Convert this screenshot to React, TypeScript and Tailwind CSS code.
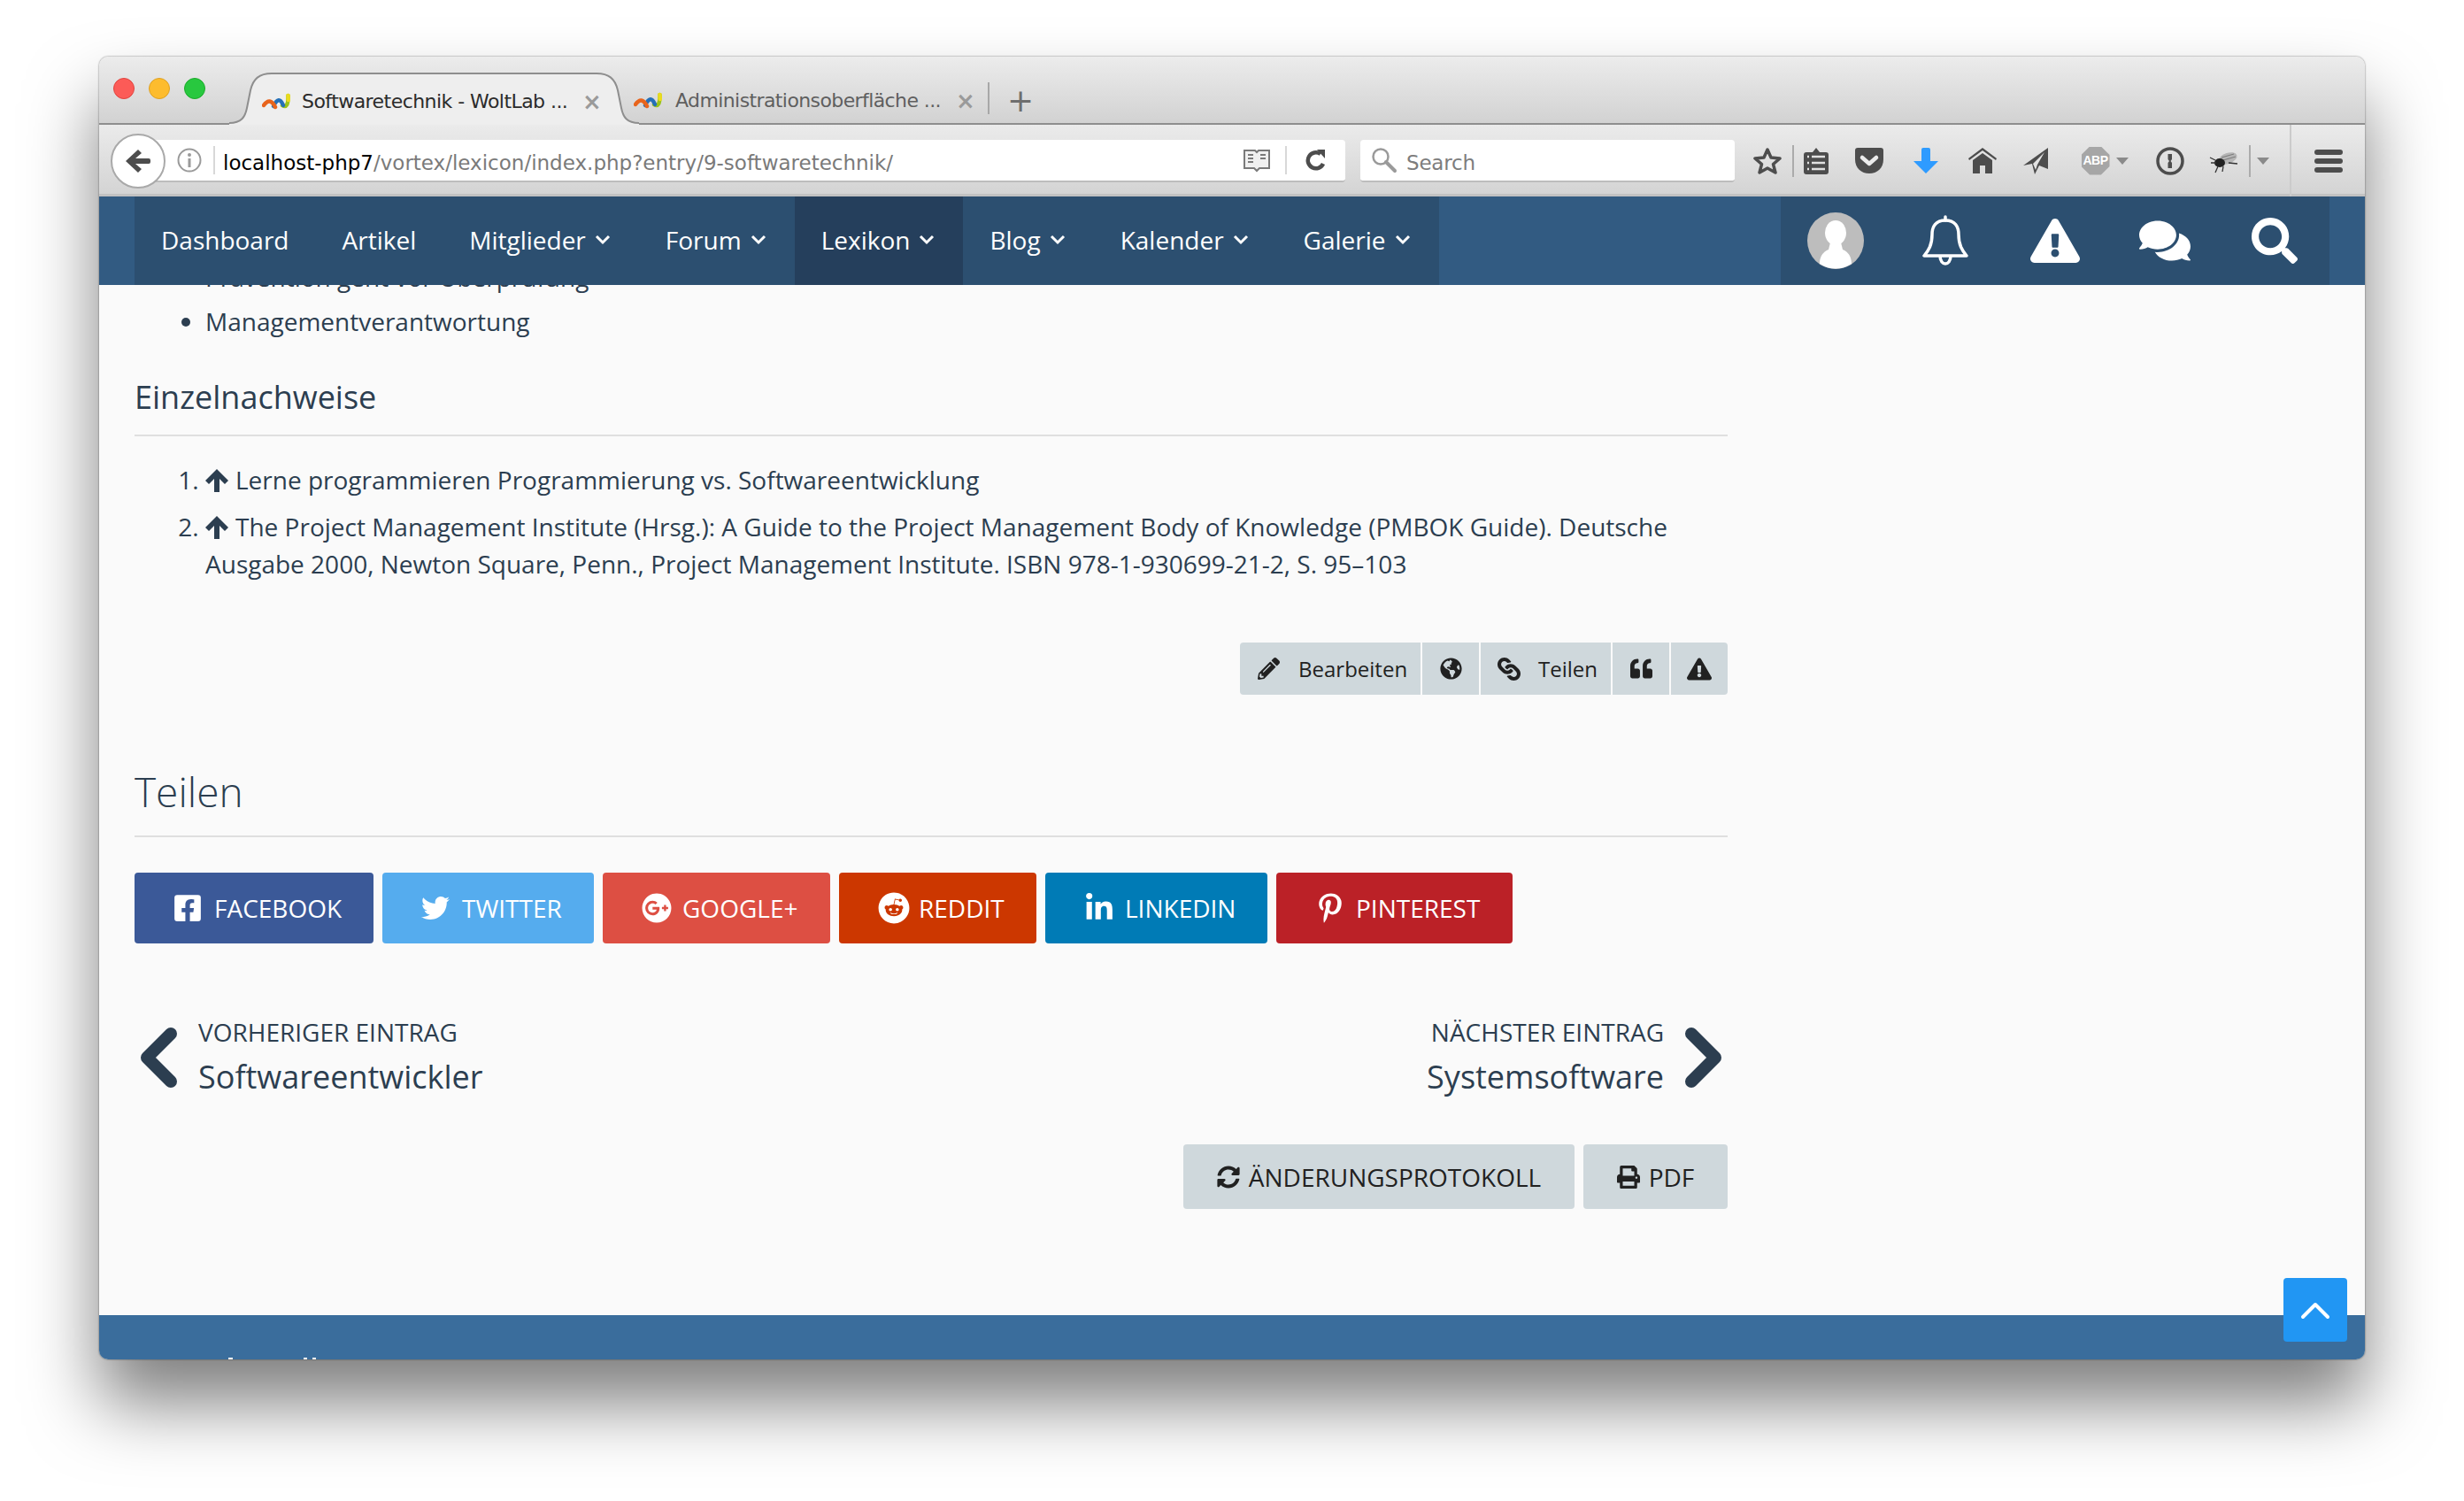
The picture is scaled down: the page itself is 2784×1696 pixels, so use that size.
import React from 'react';
import {
  FaComments,
  FaExclamationTriangle,
  FaFacebookSquare,
  FaGlobeAmericas,
  FaGooglePlus,
  FaLink,
  FaLinkedinIn,
  FaPencilAlt,
  FaPinterestP,
  FaPrint,
  FaQuoteLeft,
  FaReddit,
  FaSearch,
  FaSyncAlt,
  FaTwitter,
} from 'react-icons/fa';

const navItems = [
  { label: 'Dashboard' },
  { label: 'Artikel' },
  { label: 'Mitglieder', menu: true },
  { label: 'Forum', menu: true },
  { label: 'Lexikon', menu: true, active: true },
  { label: 'Blog', menu: true },
  { label: 'Kalender', menu: true },
  { label: 'Galerie', menu: true },
];

const socialButtons = [
  { label: 'FACEBOOK', icon: <FaFacebookSquare className="h-[34px] w-[32px]" />, bg: 'bg-[#3b5998]', w: 'w-[270px]' },
  { label: 'TWITTER', icon: <FaTwitter className="h-[32px] w-[32px]" />, bg: 'bg-[#55acee]', w: 'w-[239px]' },
  { label: 'GOOGLE+', icon: <FaGooglePlus className="h-[34px] w-[34px]" />, bg: 'bg-[#dd4f43]', w: 'w-[257px]' },
  { label: 'REDDIT', icon: <FaReddit className="h-[36px] w-[36px]" />, bg: 'bg-[#cc3700]', w: 'w-[223px]' },
  { label: 'LINKEDIN', icon: <FaLinkedinIn className="h-[34px] w-[34px]" />, bg: 'bg-[#007bb6]', w: 'w-[251px]' },
  { label: 'PINTEREST', icon: <FaPinterestP className="h-[34px] w-[34px]" />, bg: 'bg-[#bb2127]', w: 'w-[267px]' },
];

function Favicon() {
  return (
    <svg width="32" height="20" viewBox="0 0 32 20" fill="none" strokeWidth="4.5" strokeLinecap="round" className="shrink-0">
      <path d="M23 14 Q30 18 29.500 3" stroke="#9ac31c" />
      <path d="M29.800 8 L29.500 3" stroke="#eadb1e" />
      <path d="M13 15 Q19 2 24 14" stroke="#2470b8" />
      <path d="M2 14 Q9 4 15 16" stroke="#e8641c" />
    </svg>
  );
}

function TabClose() {
  return <span className="w-[20px] text-center text-[26px] leading-none font-bold text-[#9a9a9a]">×</span>;
}

function TabStrip() {
  return (
    <div className="flex h-[77px] items-end border-b-2 border-[#8e8e8e] bg-gradient-to-b from-[#ececec] to-[#d2d2d2] font-['DejaVu_Sans',sans-serif]">
      <div className="mb-[27px] ml-[16px] flex gap-[16px] self-end">
        <span className="h-[24px] w-[24px] rounded-full border border-[#e0443e] bg-[#fc5b57]" />
        <span className="h-[24px] w-[24px] rounded-full border border-[#dea123] bg-[#fdbc2e]" />
        <span className="h-[24px] w-[24px] rounded-full border border-[#1aab29] bg-[#28c83f]" />
      </div>

      {/* active tab */}
      <div className="relative z-10 -mb-[2px] ml-[27px] flex h-[59px] w-[463px] items-center pt-[6px] pl-[37px]">
        <svg className="absolute inset-0" width="463" height="59" viewBox="0 0 463 59" fill="none">
          <path d="M0 57 C14 57 18 50 20 40 L24 20 C27 7 34 1 48 1 L415 1 C429 1 436 7 439 20 L443 40 C445 50 449 57 463 57 L463 59 L0 59 Z" fill="#eeeeee" />
          <path d="M0 57 C14 57 18 50 20 40 L24 20 C27 7 34 1 48 1 L415 1 C429 1 436 7 439 20 L443 40 C445 50 449 57 463 57" stroke="#8e8e8e" strokeWidth="2" />
        </svg>
        <div className="relative flex items-center">
          <Favicon />
          <span className="ml-[13px] w-[317px] whitespace-nowrap text-[22px] leading-[30px] tracking-[-0.55px] text-[#2b2b2b]">Softwaretechnik - WoltLab ...</span>
          <TabClose />
        </div>
      </div>

      {/* background tab */}
      <div className="relative z-20 -ml-[6px] flex h-[57px] w-[400px] items-center pt-[6px]">
        <Favicon />
        <span className="ml-[15px] w-[317px] whitespace-nowrap text-[22px] leading-[30px] tracking-[-0.6px] text-[#5f5f5f]">Administrationsoberfläche ...</span>
        <TabClose />
      </div>
      <span className="mb-[10px] h-[36px] w-[2px] bg-[#a8a8a8]" />
      <span className="mb-[5px] ml-[20px] text-[36px] leading-[40px] text-[#6e6e6e]">+</span>
    </div>
  );
}

function ToolCell({ w, children }: { w: string; children: React.ReactNode }) {
  return <div className={`flex items-center justify-center ${w}`}>{children}</div>;
}

function Caret() {
  return <span className="h-0 w-0 border-x-[7px] border-t-[8px] border-x-transparent border-t-[#8a8a8a]" />;
}

function Toolbar() {
  return (
    <div className="relative flex h-[81px] items-center bg-gradient-to-b from-[#ebebeb] to-[#d3d3d3] font-['DejaVu_Sans',sans-serif] shadow-[inset_0_-3px_0_#c2c2c2]">
      <div className="relative z-10 ml-[13px] flex h-[62px] w-[62px] items-center justify-center rounded-full border-2 border-[#a9a9a9] bg-white">
        <svg width="30" height="30" viewBox="0 0 30 30" fill="#4d4d4d">
          <path d="M15 2 L19 6 L12 12 H27 a2 2 0 0 1 2 2 v2 a2 2 0 0 1 -2 2 H12 L19 24 L15 28 L1 15 Z" />
        </svg>
      </div>

      <div className="-ml-[14px] flex h-[48px] w-[1347px] items-center rounded-r-[4px] border-b-2 border-[#bdbdbd] bg-white">
        <svg className="ml-[27px] shrink-0" width="28" height="28" viewBox="0 0 28 28" fill="none">
          <circle cx="14" cy="14" r="12.5" stroke="#9a9a9a" strokeWidth="2" />
          <circle cx="14" cy="8" r="2" fill="#9a9a9a" />
          <rect x="12.5" y="12" width="3" height="10" fill="#9a9a9a" />
        </svg>
        <span className="ml-[13px] h-[32px] w-[2px] shrink-0 bg-[#d8d8d8]" />
        <span className="ml-[9px] whitespace-nowrap pt-[6px] text-[23px] leading-[30px] text-[#7a7a7a]">
          <span className="text-black">localhost-php7</span>/vortex/lexicon/index.php?entry/9-softwaretechnik/
        </span>
        <div className="ml-auto flex items-center">
          <svg width="32" height="28" viewBox="0 0 32 28" fill="none">
            <path d="M2 3 H14 L16 5 L18 3 H30 V23 H19 L16 26 L13 23 H2 Z" stroke="#7a7a7a" strokeWidth="2" fill="#f0f0f0" />
            <path d="M6 8 H12 M6 12 H12 M6 16 H12 M20 8 H26 M20 12 H26" stroke="#7a7a7a" strokeWidth="2" />
          </svg>
          <span className="ml-[16px] h-[32px] w-[2px] bg-[#d8d8d8]" />
          <svg className="mr-[21px] ml-[21px]" width="24" height="26" viewBox="0 0 24 26" fill="none">
            <path d="M20 17 A9 9 0 1 1 17 6" stroke="#4d4d4d" strokeWidth="4.5" />
            <path d="M13 1 L22 1 L22 11 Z" fill="#4d4d4d" />
          </svg>
        </div>
      </div>

      <div className="ml-[17px] flex h-[48px] w-[423px] items-center rounded-[4px] border-b-2 border-[#bdbdbd] bg-white">
        <svg className="ml-[12px]" width="30" height="30" viewBox="0 0 30 30" fill="none" stroke="#9a9a9a">
          <circle cx="11" cy="11" r="8.5" strokeWidth="2.5" />
          <path d="M17 17 L27 27" strokeWidth="4" strokeLinecap="round" />
        </svg>
        <span className="ml-[10px] pt-[6px] text-[23px] leading-[30px] tracking-[-0.2px] text-[#7d7d7d]">Search</span>
      </div>

      <div className="ml-[9px] flex h-full items-center">
        <ToolCell w="w-[56px]">
          <svg width="32" height="32" viewBox="0 0 32 32" fill="none">
            <path d="M16 3 L20 12 L30 13 L22.500 19.500 L25 29 L16 24 L7 29 L9.500 19.500 L2 13 L12 12 Z" stroke="#4d4d4d" strokeWidth="3.500" strokeLinejoin="round" />
          </svg>
        </ToolCell>
        <span className="h-[36px] w-[2px] bg-[#ababab]" />
        <ToolCell w="w-[50px]">
          <svg width="28" height="32" viewBox="0 0 28 32" fill="#4d4d4d">
            <path d="M3 6 H10 L14 1 L18 6 H25 a3 3 0 0 1 3 3 V28 a3 3 0 0 1 -3 3 H3 a3 3 0 0 1 -3 -3 V9 a3 3 0 0 1 3 -3 Z" />
            <path d="M9 11 H24 M9 18 H24 M9 25 H24 M4 11 H6 M4 18 H6 M4 25 H6" stroke="#e2e2e2" strokeWidth="2.500" />
          </svg>
        </ToolCell>
        <ToolCell w="w-[70px]">
          <svg width="32" height="30" viewBox="0 0 32 30">
            <path d="M3 0 H29 a3 3 0 0 1 3 3 V13 C32 23 25 29 16 29 C7 29 0 23 0 13 V3 a3 3 0 0 1 3 -3 Z" fill="#4d4d4d" />
            <path d="M8 11 L16 18 L24 11" fill="none" stroke="#ececec" strokeWidth="4.500" strokeLinecap="round" strokeLinejoin="round" />
          </svg>
        </ToolCell>
        <ToolCell w="w-[58px]">
          <svg width="30" height="30" viewBox="0 0 30 30" fill="#2e9bff">
            <path d="M10 2 a2 2 0 0 1 2 -2 H18 a2 2 0 0 1 2 2 V15 H29 L15 29 L1 15 H10 Z" />
          </svg>
        </ToolCell>
        <ToolCell w="w-[70px]">
          <svg width="32" height="30" viewBox="0 0 32 30" fill="#4d4d4d">
            <path d="M16 0 L32 12 L31 14 L16 3 L1 14 L0 12 Z" />
            <path d="M16 6 L27 14 V29 H19 V20 H13 V29 H5 V14 Z" />
          </svg>
        </ToolCell>
        <ToolCell w="w-[50px]">
          <svg width="28" height="32" viewBox="0 0 28 32" fill="#4d4d4d">
            <path d="M28 1 V25 L18 21 L13 31 L10 19 L0 21 Z" />
            <path d="M24 6 L11 19 L14 26 L16 20 Z" fill="#e2e2e2" />
          </svg>
        </ToolCell>
        <div className="flex w-[106px] items-center justify-center gap-[7px]">
          <span className="flex h-[32px] w-[32px] items-center justify-center bg-[#a6a6a6] font-['Liberation_Sans',sans-serif] text-[14px] font-bold tracking-[-0.5px] text-white [clip-path:polygon(30%_0,70%_0,100%_30%,100%_70%,70%_100%,30%_100%,0_70%,0_30%)]">
            ABP
          </span>
          <Caret />
        </div>
        <ToolCell w="w-[42px]">
          <svg width="32" height="32" viewBox="0 0 32 32" fill="none">
            <circle cx="16" cy="16" r="14" stroke="#4d4d4d" strokeWidth="3.500" />
            <path d="M13.500 8 H18 V14 L16.500 16 L18 18 V24 H13.500 V18 L15 16 L13.500 14 Z" fill="#4d4d4d" />
          </svg>
        </ToolCell>
        <ToolCell w="w-[68px]">
          <svg className="ml-[12px]" width="34" height="28" viewBox="0 0 34 28" fill="none">
            <ellipse cx="21" cy="11" rx="11" ry="6" transform="rotate(-20 21 11)" fill="#b5b5b5" />
            <path d="M14 10 L28 6 M16 13 L30 9" stroke="#7a7a7a" strokeWidth="1" />
            <ellipse cx="12" cy="16" rx="6" ry="5" fill="#222222" />
            <path d="M2 16 L8 16 M10 20 L7 27 M16 20 L15 26 M1 10 L7 13 M22 16 L32 17" stroke="#333333" strokeWidth="1.300" />
          </svg>
        </ToolCell>
        <span className="h-[36px] w-[2px] bg-[#ababab]" />
        <ToolCell w="w-[28px]">
          <Caret />
        </ToolCell>
        <span className="ml-[16px] h-full w-[2px] bg-[#cbcbcb]" />
        <div className="flex w-[83px] flex-col items-center gap-[4px]">
          <span className="h-[6px] w-[32px] rounded-full bg-[#4d4d4d]" />
          <span className="h-[6px] w-[32px] rounded-full bg-[#4d4d4d]" />
          <span className="h-[6px] w-[32px] rounded-full bg-[#4d4d4d]" />
        </div>
      </div>
    </div>
  );
}

function Avatar() {
  return (
    <svg width="64" height="64" viewBox="0 0 64 64">
      <circle cx="32" cy="32" r="32" fill="#bdbdbd" />
      <ellipse cx="32" cy="23" rx="12" ry="14" fill="#ffffff" />
      <path d="M26 34 H38 L40 42 C50 46 50 56 50 58 A32 32 0 0 1 14 58 C14 56 14 46 24 42 Z" fill="#ffffff" />
    </svg>
  );
}

function BellOutline() {
  return (
    <svg width="54" height="58" viewBox="0 0 54 58" fill="none" stroke="#ffffff" strokeWidth="3.500" strokeLinejoin="round">
      <path d="M27 6 C16 6 12 13 12 22 C12 34 8 40 3 46 H51 C46 40 42 34 42 22 C42 13 38 6 27 6 Z" />
      <path d="M27 2 V6" strokeLinecap="round" />
      <path d="M21 46 C21 52 24 55 27 55 C30 55 33 52 33 46" />
    </svg>
  );
}

function SiteNav() {
  return (
    <nav className="relative z-10 flex h-[100px] shrink-0 bg-[#325b82] px-[40px] text-white">
      <ul className="flex bg-[#2c4f70]">
        {navItems.map((item) => (
          <li
            key={item.label}
            className={`flex items-center gap-[10px] pb-[2px] pl-[30px] text-[28px] ${item.menu ? 'pr-[32px]' : 'pr-[30px]'} ${item.active ? 'bg-[#253f5c]' : ''}`}
          >
            {item.label}
            {item.menu && (
              <svg width="18" height="12" viewBox="0 0 18 12" fill="none">
                <path d="M2 2 L9 9 L16 2" stroke="#ffffff" strokeWidth="3" />
              </svg>
            )}
          </li>
        ))}
      </ul>
      <div className="ml-auto flex bg-[#2c4f70]">
        <div className="flex w-[124px] items-center justify-center">
          <Avatar />
        </div>
        <div className="flex w-[124px] items-center justify-center">
          <BellOutline />
        </div>
        <div className="flex w-[124px] items-center justify-center">
          <FaExclamationTriangle className="h-[56px] w-[56px]" />
        </div>
        <div className="flex w-[124px] items-center justify-center">
          <FaComments className="h-[54px] w-[58px]" />
        </div>
        <div className="flex w-[124px] items-center justify-center">
          <FaSearch className="h-[52px] w-[52px]" />
        </div>
      </div>
    </nav>
  );
}

function ActionGroup() {
  return (
    <div className="mt-[68px] flex justify-end gap-[2px] text-[#212121]">
      <div className="flex h-[59px] w-[204px] items-center rounded-l-[4px] bg-[#cfd8dc] pl-[20px] text-[24px]">
        <FaPencilAlt className="h-[25px] w-[25px]" />
        <span className="ml-[21px]">Bearbeiten</span>
      </div>
      <div className="flex h-[59px] w-[64px] items-center justify-center bg-[#cfd8dc]">
        <FaGlobeAmericas className="h-[25px] w-[25px]" />
      </div>
      <div className="flex h-[59px] w-[147px] items-center bg-[#cfd8dc] pl-[19px] text-[24px]">
        <FaLink className="h-[26px] w-[26px] rotate-90" />
        <span className="ml-[20px]">Teilen</span>
      </div>
      <div className="flex h-[59px] w-[64px] items-center justify-center bg-[#cfd8dc]">
        <FaQuoteLeft className="h-[25px] w-[27px]" />
      </div>
      <div className="flex h-[59px] w-[64px] items-center justify-center rounded-r-[4px] bg-[#cfd8dc]">
        <FaExclamationTriangle className="h-[26px] w-[28px]" />
      </div>
    </div>
  );
}

function Pager() {
  return (
    <div className="mt-[80px] flex justify-between text-[#2c3e50]">
      <div className="flex items-center">
        <svg className="ml-[4px]" width="46" height="68" viewBox="0 0 46 68" fill="none">
          <path d="M37 7 L10 34 L37 61" stroke="#2c3e50" strokeWidth="14" strokeLinecap="round" strokeLinejoin="round" />
        </svg>
        <div className="ml-[22px]">
          <div className="text-[28px] leading-[40px]">VORHERIGER EINTRAG</div>
          <div className="mt-[4px] text-[36px] leading-[54px]">Softwareentwickler</div>
        </div>
      </div>
      <div className="flex items-center">
        <div className="mr-[22px] text-right">
          <div className="text-[28px] leading-[40px]">NÄCHSTER EINTRAG</div>
          <div className="mt-[4px] text-[36px] leading-[54px]">Systemsoftware</div>
        </div>
        <svg className="mr-[4px]" width="46" height="68" viewBox="0 0 46 68" fill="none">
          <path d="M9 7 L36 34 L9 61" stroke="#2c3e50" strokeWidth="14" strokeLinecap="round" strokeLinejoin="round" />
        </svg>
      </div>
    </div>
  );
}

function ArrowUp() {
  return (
    <svg className="mr-[8px] inline align-[-3px]" width="26" height="26" viewBox="0 0 26 26" fill="#2c3e50">
      <path d="M13 0 L26 13 L22 17 L16 11 V26 H10 V11 L4 17 L0 13 Z" />
    </svg>
  );
}

export default function App() {
  return (
    <div className="h-[1696px] w-[2784px] bg-white pt-[64px] pl-[112px] font-['Open_Sans',sans-serif] text-[#2c3e50]">
      <div className="relative flex h-[1472px] w-[2560px] flex-col overflow-hidden rounded-[10px] shadow-[0_50px_80px_rgba(0,0,0,0.5),0_0_2px_rgba(0,0,0,0.6)]">
        <TabStrip />
        <Toolbar />
        <SiteNav />

        <main className="flex-1 overflow-hidden bg-[#fafafa] pl-[40px]">
          <div className="w-[1800px]">
            <ul className="-mt-[30px] list-disc pl-[80px] text-[28px] leading-[42px]">
              <li className="mb-[8px]">Prävention geht vor Überprüfung</li>
              <li>Managementverantwortung</li>
            </ul>

            <h2 className="mt-[41px] border-b-2 border-[#dfdfdf] pb-[18px] text-[36px] leading-[48px]">Einzelnachweise</h2>
            <ol className="mt-[28px] list-decimal pl-[80px] text-[28px] leading-[42px]">
              <li className="mb-[11px]">
                <ArrowUp />
                Lerne programmieren Programmierung vs. Softwareentwicklung
              </li>
              <li>
                <ArrowUp />
                The Project Management Institute (Hrsg.): A Guide to the Project Management Body of Knowledge (PMBOK Guide). Deutsche Ausgabe 2000, Newton Square, Penn., Project Management Institute. ISBN 978-1-930699-21-2, S. 95–103
              </li>
            </ol>

            <ActionGroup />

            <h2 className="mt-[79px] border-b-2 border-[#dfdfdf] pb-[20px] text-[46px] leading-[60px] font-light">Teilen</h2>
            <div className="mt-[40px] flex gap-[10px]">
              {socialButtons.map((b) => (
                <div key={b.label} className={`flex h-[80px] items-center rounded-[4px] pl-[44px] text-[28px] text-white ${b.bg} ${b.w}`}>
                  <span className="flex w-[46px] shrink-0">{b.icon}</span>
                  {b.label}
                </div>
              ))}
            </div>

            <Pager />

            <div className="mt-[49px] flex justify-end gap-[10px] text-[28px] text-[#212121]">
              <div className="flex h-[73px] w-[442px] items-center justify-center gap-[10px] rounded-[4px] bg-[#cfd8dc]">
                <FaSyncAlt className="h-[26px] w-[26px]" />
                ÄNDERUNGSPROTOKOLL
              </div>
              <div className="flex h-[73px] w-[163px] items-center justify-center gap-[10px] rounded-[4px] bg-[#cfd8dc]">
                <FaPrint className="h-[26px] w-[26px]" />
                PDF
              </div>
            </div>
          </div>
        </main>

        {/* only the tops of the footer letters show above the window edge */}
        <footer className="flex h-[50px] shrink-0 items-end bg-[#3a6d9c]">
          <span className="ml-[146px] h-[2px] w-[5px] bg-white" />
          <span className="ml-[80px] h-[2px] w-[4px] bg-white" />
          <span className="ml-[6px] h-[2px] w-[4px] bg-white" />
        </footer>

        <button className="absolute right-[20px] bottom-[20px] flex h-[72px] w-[72px] items-center justify-center rounded-[4px] bg-[#2196f3]">
          <svg width="34" height="22" viewBox="0 0 34 22" fill="none">
            <path d="M3 19 L17 5 L31 19" stroke="#ffffff" strokeWidth="4" strokeLinecap="round" strokeLinejoin="round" />
          </svg>
        </button>
      </div>
    </div>
  );
}
